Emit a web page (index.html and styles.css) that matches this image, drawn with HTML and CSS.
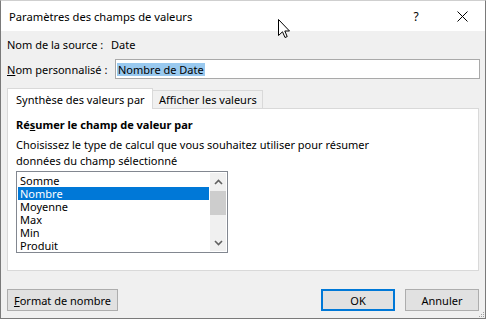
FILE: index.html
```html
<!DOCTYPE html>
<html lang="fr">
<head>
<meta charset="utf-8">
<title>Paramètres des champs de valeurs</title>
<link rel="stylesheet" href="styles.css">
</head>
<body>
<div class="window">
  <div class="titlebar">
    <span class="title">Paramètres des champs de valeurs</span>
    <div class="tb-btn help">?</div>
    <div class="tb-btn close">
      <svg width="11" height="11" viewBox="0 0 11 11"><path d="M0.5 0.5 L10.5 10.5 M10.5 0.5 L0.5 10.5" stroke="#000" stroke-width="1" fill="none"/></svg>
    </div>
  </div>
  <div class="content">
    <div class="row source">
      <span class="label-src">Nom de la source :</span>
      <span>Date</span>
    </div>
    <div class="row name">
      <span class="label-name"><u>N</u>om personnalisé :</span>
      <div class="input"><span class="sel">Nombre de Date</span></div>
    </div>
    <div class="tabs">
      <div class="tab active">Synthèse des valeurs par</div>
      <div class="tab inactive">Afficher les valeurs</div>
    </div>
    <div class="panel">
      <div class="heading">Ré<u>s</u>umer le champ de valeur par</div>
      <p class="desc">Choisissez le type de calcul que vous souhaitez utiliser pour résumer<br>données du champ sélectionné</p>
      <div class="listbox">
        <ul class="items">
          <li>Somme</li>
          <li class="selected">Nombre</li>
          <li>Moyenne</li>
          <li>Max</li>
          <li>Min</li>
          <li>Produit</li>
        </ul>
        <div class="scrollbar">
          <div class="arrow">
            <svg width="9" height="6" viewBox="0 0 9 6"><path d="M1 5 L4.5 1.5 L8 5" stroke="#606060" stroke-width="1.6" fill="none"/></svg>
          </div>
          <div class="track"><div class="thumb"></div></div>
          <div class="arrow">
            <svg width="9" height="6" viewBox="0 0 9 6"><path d="M1 1 L4.5 4.5 L8 1" stroke="#606060" stroke-width="1.6" fill="none"/></svg>
          </div>
        </div>
      </div>
    </div>
    <div class="buttons">
      <div class="btn format"><u>F</u>ormat de nombre</div>
      <div class="btn ok">OK</div>
      <div class="btn cancel">Annuler</div>
    </div>
  </div>
  <svg class="grip" width="7" height="7" viewBox="0 0 7 7">
    <rect x="5" y="1" width="1" height="1" fill="#a0a0a0"/>
    <rect x="3" y="3" width="1" height="1" fill="#a0a0a0"/>
    <rect x="5" y="3" width="1" height="1" fill="#a0a0a0"/>
    <rect x="1" y="5" width="1" height="1" fill="#a0a0a0"/>
    <rect x="3" y="5" width="1" height="1" fill="#a0a0a0"/>
    <rect x="5" y="5" width="1" height="1" fill="#a0a0a0"/>
  </svg>
  <svg class="cursor" width="13" height="20" viewBox="0 0 13 20">
    <path d="M0.5 0.5 L0.5 16.5 L4.5 12.8 L7 18.5 L9.2 17.6 L6.8 12 L11.5 12 Z" fill="#fff" stroke="#000" stroke-width="1" stroke-linejoin="miter"/>
  </svg>
</div>
</body>
</html>
```

FILE: styles.css
```css
* { box-sizing: border-box; }

body {
  margin: 0;
  font-family: "Noto Sans", "Open Sans", sans-serif;
  font-size: 11px;
  color: #000;
  background: #fff;
  white-space: nowrap;
}

.window {
  position: relative;
  width: 486px;
  height: 319px;
  border: 1px solid #7a7a7a;
  border-top-color: #cfcfcf;
  background: #f0f0f0;
  display: flex;
  flex-direction: column;
  overflow: hidden;
}

.titlebar {
  height: 30px;
  background: #fff;
  display: flex;
  align-items: center;
  flex-shrink: 0;
}

.title {
  padding-left: 8px;
  font-size: 11.2px;
  color: #000;
}

.tb-btn {
  width: 46px;
  height: 30px;
  display: flex;
  align-items: center;
  justify-content: center;
}

.help { margin-left: auto; font-size: 12px; }

.content {
  padding: 0 6px;
  display: flex;
  flex-direction: column;
}

.row {
  display: flex;
  align-items: center;
}

.row.source {
  height: 18px;
  margin-top: 4px;
}

.label-src { width: 104px; flex-shrink: 0; }

.row.name {
  height: 20px;
  margin-top: 6px;
}

.label-name { width: 108px; flex-shrink: 0; }

.input {
  width: 365px;
  height: 20px;
  margin-right: -1px;
  background: #fff;
  border: 1px solid #a9a9a9;
  padding-left: 1px;
  display: flex;
  align-items: center;
}

.sel {
  background: #99c9ef;
  line-height: 13px;
  height: 13px;
  padding: 0 1px;
  display: inline-block;
}

.tabs {
  display: flex;
  align-items: flex-start;
  height: 21px;
  margin-top: 9px;
  margin-bottom: -1px;
  position: relative;
  z-index: 1;
}

.tab {
  border: 1px solid #d9d9d9;
  border-bottom: none;
  line-height: 16px;
}

.tab.active {
  width: 146px;
  height: 21px;
  background: #fff;
  padding: 3px 0 0 8px;
}

.tab.inactive {
  width: 110px;
  height: 18px;
  margin-top: 2px;
  border-left: none;
  background: #f0f0f0;
  padding: 1px 0 0 6px;
}

.panel {
  height: 163px;
  background: #fff;
  border: 1px solid #d9d9d9;
  padding: 8px 0 0 8px;
}

.heading {
  font-weight: bold;
  line-height: 16px;
}

.desc {
  margin: 4px 0 0;
  line-height: 16px;
}

.listbox {
  margin-top: 2px;
  width: 212px;
  height: 82px;
  border: 1px solid #828790;
  padding: 1px;
  display: flex;
  background: #fff;
}

.items {
  list-style: none;
  margin: 0;
  padding: 1px 0 0;
  width: 191px;
}

.items li {
  height: 13px;
  line-height: 13px;
  padding-left: 2px;
}

.items li.selected {
  background: #0078d7;
  color: #fff;
}

.scrollbar {
  margin-left: 1px;
  width: 16px;
  background: #f0f0f0;
  display: flex;
  flex-direction: column;
}

.arrow {
  height: 17px;
  display: flex;
  align-items: center;
  justify-content: center;
}

.track {
  flex: 1;
  padding-top: 1px;
}

.thumb {
  height: 24px;
  background: #cdcdcd;
}

.buttons {
  display: flex;
  margin-top: 18px;
}

.btn {
  height: 22px;
  background: #e1e1e1;
  border: 1px solid #adadad;
  display: flex;
  align-items: center;
  justify-content: center;
}

.btn.format { width: 111px; }

.btn.ok {
  width: 74px;
  margin-left: auto;
  border: 2px solid #0078d7;
}

.btn.cancel {
  width: 74px;
  margin-left: 10px;
}

.grip {
  position: absolute;
  right: 0;
  bottom: 0;
}

.cursor {
  position: absolute;
  left: 277px;
  top: 18px;
}
```
